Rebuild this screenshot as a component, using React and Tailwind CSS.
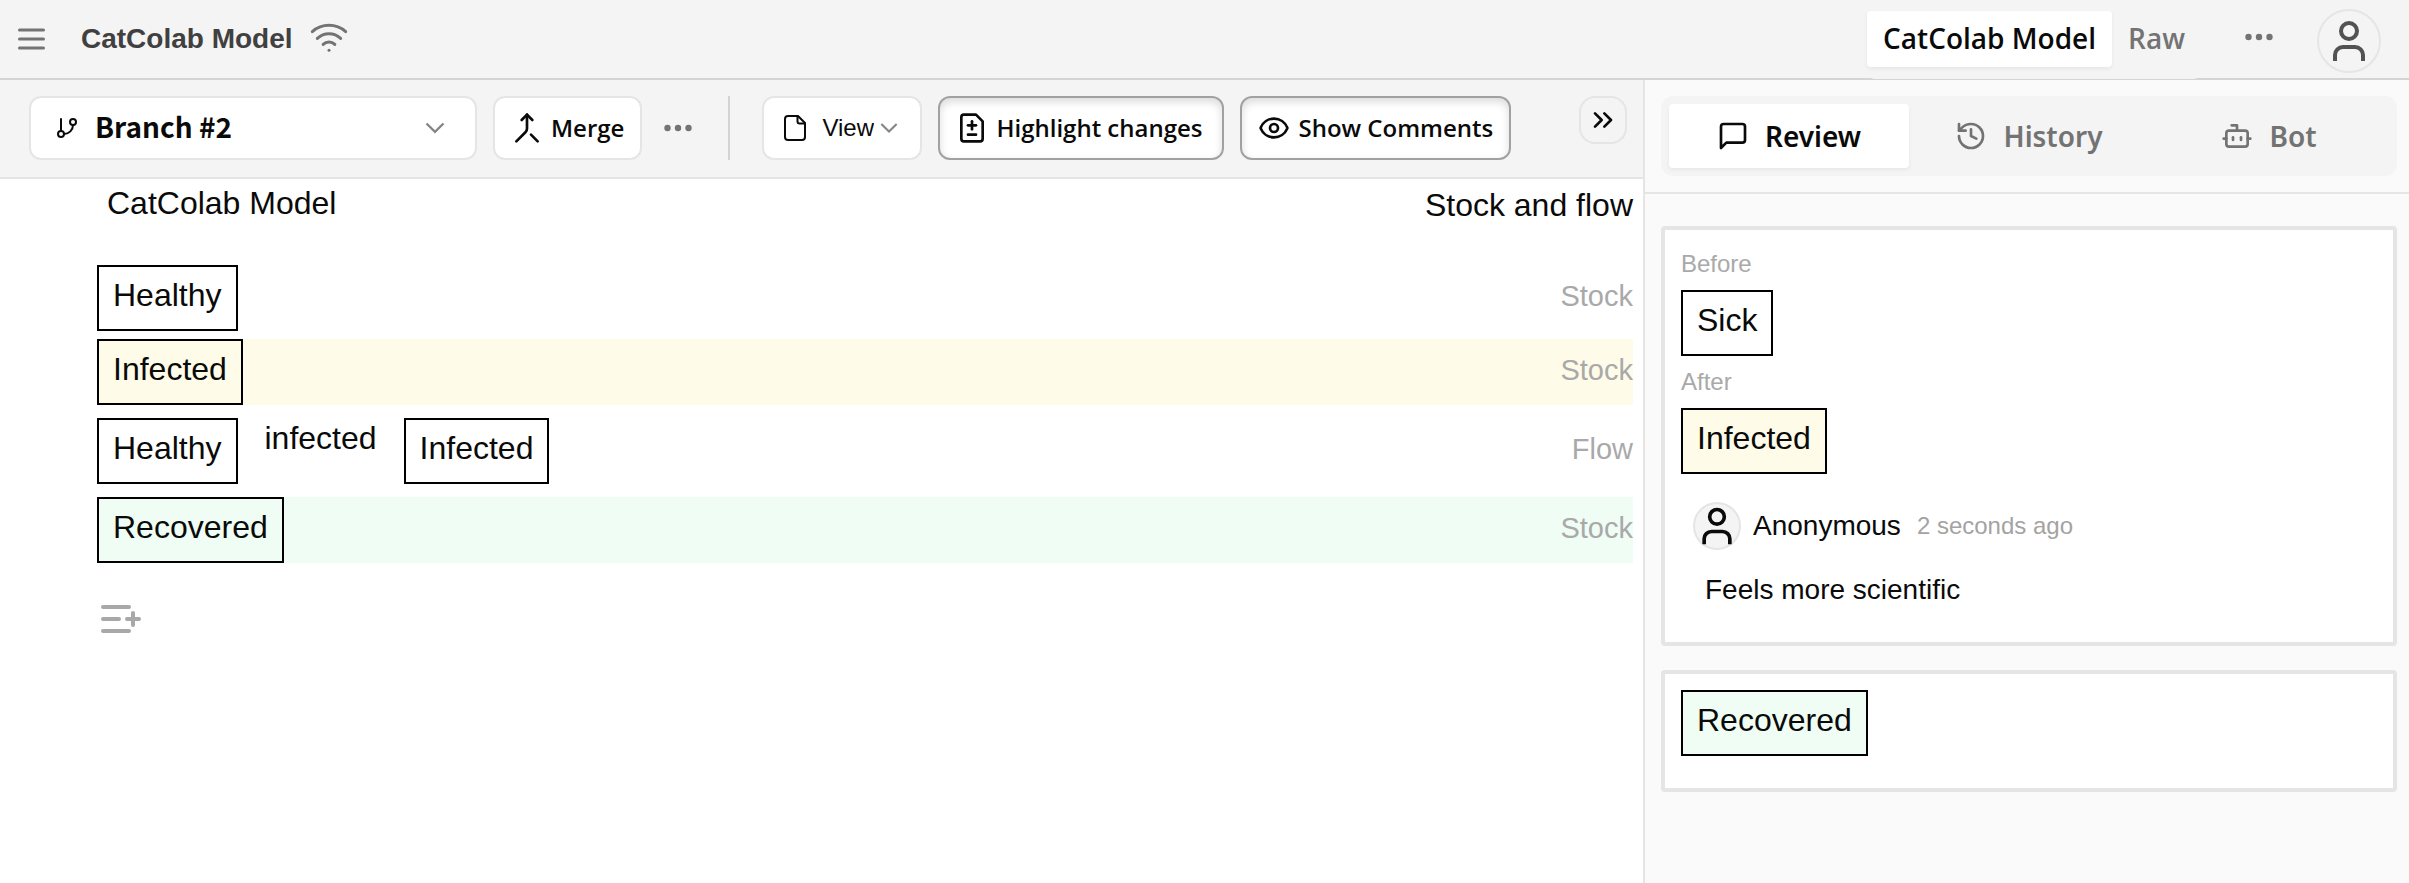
import {
  ChevronsRight,
  Eye,
  GitBranch,
  Wifi,
} from "lucide-react";

function StrokeIcon({ children, className = "size-8" }) {
  return (
    <svg
      viewBox="0 0 24 24"
      fill="none"
      stroke="currentColor"
      strokeWidth="2"
      strokeLinecap="round"
      strokeLinejoin="round"
      aria-hidden="true"
      className={`shrink-0 ${className}`}
    >
      {children}
    </svg>
  );
}

function PersonIcon({ className }) {
  return (
    <StrokeIcon className={className}>
      <path strokeLinecap="butt" d="M19 22v-3a4 4 0 0 0-4-4H9a4 4 0 0 0-4 4v3" />
      <circle cx="12" cy="7" r="4" />
    </StrokeIcon>
  );
}

function MergeIcon() {
  return (
    <StrokeIcon>
      <path d="m8 6 4-4 4 4" />
      <path d="M12 2v10.3a4 4 0 0 1-1.172 2.872L4 22" />
      <path d="m20 22-5-5" />
    </StrokeIcon>
  );
}

function DiffIcon() {
  return (
    <StrokeIcon>
      <path d="M15 2H6a2 2 0 0 0-2 2v16a2 2 0 0 0 2 2h12a2 2 0 0 0 2-2V7Z" />
      <path d="M9 10h6" />
      <path d="M12 13V7" />
      <path d="M9 17h6" />
    </StrokeIcon>
  );
}

function HistoryIcon() {
  return (
    <StrokeIcon>
      <path d="M3 12a9 9 0 1 0 9-9 9.75 9.75 0 0 0-6.74 2.74L3 8" />
      <path d="M3 3v5h5" />
      <path d="M12 7v5l4 2" />
    </StrokeIcon>
  );
}

function BotIcon() {
  return (
    <StrokeIcon>
      <path d="M12 8V4H8" />
      <rect width="16" height="12" x="4" y="8" rx="2" />
      <path d="M2 14h2" />
      <path d="M20 14h2" />
      <path d="M15 13v2" />
      <path d="M9 13v2" />
    </StrokeIcon>
  );
}

function DotsIcon() {
  return (
    <svg viewBox="0 0 28 8" fill="currentColor" aria-hidden="true" className="h-2 w-7">
      <circle cx="3.5" cy="4" r="3.2" />
      <circle cx="14" cy="4" r="3.2" />
      <circle cx="24.5" cy="4" r="3.2" />
    </svg>
  );
}

function ChevronIcon({ className }) {
  return (
    <svg
      viewBox="0 0 20 12"
      fill="none"
      stroke="currentColor"
      strokeWidth="2.4"
      aria-hidden="true"
      className={`pointer-events-none shrink-0 text-[#868686] ${className}`}
    >
      <path d="m1.500 1.500 8.500 8.300 8.500-8.300" />
    </svg>
  );
}

function FileIcon() {
  return (
    <svg
      viewBox="0 0 22 26"
      fill="none"
      stroke="currentColor"
      strokeWidth="2"
      strokeLinejoin="round"
      aria-hidden="true"
      className="h-[26px] w-[22px] shrink-0"
    >
      <path d="M14 1H4a3 3 0 0 0-3 3v18a3 3 0 0 0 3 3h14a3 3 0 0 0 3-3V8Z" />
      <path d="M13.500 1.500V6.500a2 2 0 0 0 2 2H20.500" />
    </svg>
  );
}

function Stock({ name, tone = "bg-white" }) {
  return (
    <div className={`w-fit border-2 border-black px-[14px] pt-1 pb-[10px] text-[32px] leading-12 ${tone}`}>
      {name}
    </div>
  );
}

function Row({ kind, tone = "", children }) {
  return (
    <div className={`flex items-baseline justify-between ${tone}`}>
      <div className="flex items-start">{children}</div>
      <span className="text-[29px] leading-10 text-[#a9a9a9]">{kind}</span>
    </div>
  );
}

function Toggle({ icon, label, className = "" }) {
  return (
    <button
      type="button"
      aria-pressed="true"
      className={`flex h-16 items-center gap-2 rounded-xl border-2 border-[#a1a1a1] bg-white px-4 font-['Open_Sans',sans-serif] text-2xl font-semibold whitespace-nowrap shadow-[inset_0_4px_8px_rgba(0,0,0,0.14)] ${className}`}
    >
      {icon}
      {label}
    </button>
  );
}

function SideTab({ icon, label, active = false }) {
  return (
    <button
      type="button"
      role="tab"
      aria-selected={active}
      className={`flex h-16 flex-1 items-center justify-center gap-4 rounded font-['Noto_Sans',sans-serif] text-[28px] font-semibold ${
        active ? "bg-white text-[#0a0a0a] shadow-[0_2px_4px_rgba(0,0,0,0.06)]" : "text-[#737373]"
      }`}
    >
      {icon}
      {label}
    </button>
  );
}

function Card({ children }) {
  return (
    <article className="flex flex-col gap-2 rounded border-4 border-[#e5e5e5] bg-white px-4">
      {children}
    </article>
  );
}

function Header() {
  return (
    <header className="flex h-20 items-center border-b-2 border-[#d4d4d4] bg-[#f4f4f4] pr-7 pl-[18px]">
      <button type="button" aria-label="Open menu" className="text-[#737373]">
        <svg viewBox="0 0 27 22" stroke="currentColor" strokeWidth="3" strokeLinecap="round" className="h-[22px] w-[27px]">
          <path d="M1.500 2H25.500M1.500 11H25.500M1.500 20H25.500" />
        </svg>
      </button>
      <h1 className="ml-9 text-[28px] leading-9 font-bold text-[#404040]">CatColab Model</h1>
      <Wifi className="mb-1 ml-4 size-10 text-[#737373]" strokeWidth={1.8} />
      <div
        role="tablist"
        aria-label="Editor"
        className="ml-auto flex h-20 shrink-0 items-center rounded-lg bg-[#f4f4f4] font-['Open_Sans',sans-serif] text-[28px] font-semibold"
      >
        <button
          type="button"
          role="tab"
          aria-selected="true"
          className="h-14 rounded bg-white px-4 pb-[2px] text-[#0a0a0a] shadow-[0_2px_4px_rgba(0,0,0,0.06)]"
        >
          CatColab Model
        </button>
        <button type="button" role="tab" aria-selected="false" className="h-14 px-4 pb-[2px] text-[#737373]">
          Raw
        </button>
      </div>
      <button type="button" aria-label="More options" className="mb-1 ml-11 text-[#737373]">
        <DotsIcon />
      </button>
      <button
        type="button"
        aria-label="Account"
        className="mt-1 ml-11 flex size-16 items-center justify-center rounded-full border-2 border-[#e5e5e5] text-[#525252]"
      >
        <PersonIcon className="size-12" />
      </button>
    </header>
  );
}

function Toolbar() {
  return (
    <div className="flex items-center border-b-2 border-[#e5e5e5] bg-[#f4f4f4] pt-4 pr-4 pb-[17px] pl-[29px]">
      <div className="flex h-16 w-[448px] items-center rounded-xl border-2 border-[#e5e5e5] bg-white pr-[30px] pl-6">
        <GitBranch className="size-6 shrink-0" />
        <select
          aria-label="Branch"
          className="ml-4 h-full flex-1 appearance-none bg-transparent pb-1 font-['Noto_Sans_CJK_SC',sans-serif] text-[28px] font-bold"
        >
          <option>Branch #2</option>
        </select>
        <ChevronIcon className="h-3 w-5" />
      </div>
      <button
        type="button"
        className="ml-4 flex h-16 items-center gap-2 rounded-xl border-2 border-[#e5e5e5] bg-white px-4 font-['Open_Sans',sans-serif] text-2xl font-semibold"
      >
        <MergeIcon />
        Merge
      </button>
      <button type="button" aria-label="Branch options" className="ml-[22px] text-[#737373]">
        <DotsIcon />
      </button>
      <div className="ml-9 h-16 w-[2px] bg-[#d4d4d4]" />
      <div className="ml-8 flex h-16 items-center rounded-xl border-2 border-[#e5e5e5] bg-white pr-[22px] pl-5">
        <FileIcon />
        <select aria-label="View" className="ml-4 h-full appearance-none bg-transparent text-2xl">
          <option>View</option>
        </select>
        <ChevronIcon className="ml-[6px] h-3 w-[18px]" />
      </div>
      <Toggle icon={<DiffIcon />} label="Highlight changes" className="ml-4 min-w-[286px]" />
      <Toggle icon={<Eye className="size-8 shrink-0" />} label="Show Comments" className="ml-4" />
      <button
        type="button"
        aria-label="Collapse sidebar"
        className="ml-auto flex size-12 items-center justify-center self-start rounded-2xl border-2 border-[#e5e5e5]"
      >
        <ChevronsRight className="size-8" />
      </button>
    </div>
  );
}

function Model() {
  return (
    <div className="pr-[10px] pl-[97px]">
      <div className="mb-9 flex items-start justify-between text-[32px] leading-12">
        <h2 className="pl-[10px]">CatColab Model</h2>
        <span className="pt-[2px]">Stock and flow</span>
      </div>
      <Row kind="Stock">
        <Stock name="Healthy" />
      </Row>
      <div className="mt-2">
        <Row kind="Stock" tone="bg-[#fefbe8]">
          <Stock name="Infected" tone="bg-[#fefbe8]" />
        </Row>
      </div>
      <div className="mt-[13px]">
        <Row kind="Flow">
          <Stock name="Healthy" />
          <span className="mx-[27px] text-[32px] leading-10">infected</span>
          <Stock name="Infected" />
        </Row>
      </div>
      <div className="mt-[13px]">
        <Row kind="Stock" tone="bg-[#effdf4]">
          <Stock name="Recovered" tone="bg-[#effdf4]" />
        </Row>
      </div>
      <button type="button" aria-label="Add cell" className="mt-[42px] ml-1 block text-[#a8a8a8]">
        <svg viewBox="0 0 40 28" stroke="currentColor" strokeWidth="4" strokeLinecap="round" className="h-7 w-10">
          <path d="M2 2H28M2 14H18M2 26H28M26 14H38M32 8V20" />
        </svg>
      </button>
    </div>
  );
}

function Sidebar() {
  return (
    <aside className="w-[766px] shrink-0 border-l-2 border-[#e5e5e5] bg-[#fafafa]">
      <div className="border-b-2 border-[#e5e5e5] py-4 pr-3 pl-4">
        <div role="tablist" aria-label="Sidebar" className="flex rounded-xl bg-[#f4f4f4] p-2">
          <SideTab
            active
            icon={
              <StrokeIcon>
                <path d="M21 15a2 2 0 0 1-2 2H7l-4 4V5a2 2 0 0 1 2-2h14a2 2 0 0 1 2 2z" />
              </StrokeIcon>
            }
            label="Review"
          />
          <SideTab icon={<HistoryIcon />} label="History" />
          <SideTab icon={<BotIcon />} label="Bot" />
        </div>
      </div>
      <div className="flex flex-col gap-6 pt-8 pr-3 pl-4">
        <Card>
          <p className="mt-4 text-2xl leading-9 text-[#a9a9a9]">Before</p>
          <Stock name="Sick" />
          <p className="text-2xl leading-9 text-[#a9a9a9]">After</p>
          <Stock name="Infected" tone="bg-[#fefbe8]" />
          <div className="mt-5 mb-8 px-3">
            <div className="flex items-center">
              <div className="flex size-12 items-center justify-center rounded-full border-2 border-[#e5e5e5] bg-[#f4f4f4]">
                <PersonIcon className="size-11" />
              </div>
              <span className="ml-3 text-[28px] leading-10">Anonymous</span>
              <span className="ml-4 text-2xl leading-8 text-[#a3a3a3]">2 seconds ago</span>
            </div>
            <p className="mt-5 pl-3 text-[28px] leading-10">Feels more scientific</p>
          </div>
        </Card>
        <Card>
          <div className="mt-4 mb-8">
            <Stock name="Recovered" tone="bg-[#effdf4]" />
          </div>
        </Card>
      </div>
    </aside>
  );
}

export default function App() {
  return (
    <div className="flex min-h-screen flex-col bg-white font-['Liberation_Sans',Arial,sans-serif] text-[#0a0a0a]">
      <Header />
      <div className="flex flex-1">
        <main className="min-w-0 flex-1">
          <Toolbar />
          <Model />
        </main>
        <Sidebar />
      </div>
    </div>
  );
}
